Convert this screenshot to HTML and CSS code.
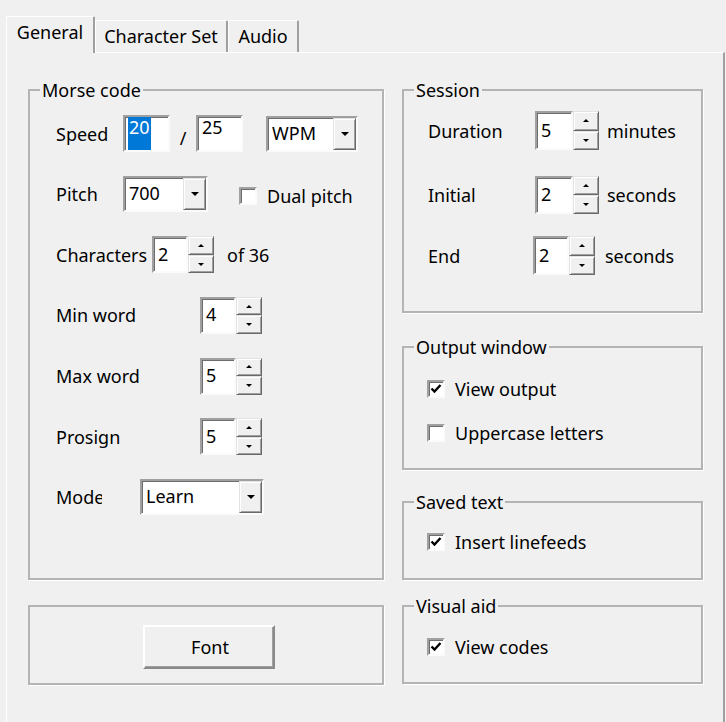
FILE: index.html
```html
<!DOCTYPE html>
<html lang="en">
<head>
<meta charset="utf-8">
<title>General</title>
<link rel="stylesheet" href="styles.css">
</head>
<body>
<div class="dialog">
  <div class="tabs">
    <div class="tab tab-general is-active">General</div>
    <div class="tab tab-charset">Character Set</div>
    <div class="tab tab-audio">Audio</div>
  </div>
  <div class="panel">
    <div class="col col-left">
      <fieldset class="group morse">
        <legend>Morse code</legend>
        <div class="group-body rows">
          <div class="row">
            <span class="lbl lbl-67">Speed</span>
            <div class="edit edit-top w47"><span class="sel">20</span></div>
            <span class="slash">/</span>
            <div class="edit edit-top w47"><span class="txt">25</span></div>
            <div class="combo w92 ml-23"><span class="combo-text">WPM</span><span class="drop"></span></div>
          </div>
          <div class="row">
            <span class="lbl lbl-67">Pitch</span>
            <div class="combo w85"><span class="combo-text">700</span><span class="drop"></span></div>
            <span class="check ml-31 check-low"><span class="box"></span>Dual pitch</span>
          </div>
          <div class="row">
            <span class="lbl lbl-96">Characters</span>
            <div class="spinbox"><div class="edit w36"><span class="txt">2</span></div><div class="spin"><span class="up"></span><span class="down"></span></div></div>
            <span class="after ml-13">of 36</span>
          </div>
          <div class="row">
            <span class="lbl lbl-144">Min word</span>
            <div class="spinbox"><div class="edit w36"><span class="txt">4</span></div><div class="spin"><span class="up"></span><span class="down"></span></div></div>
          </div>
          <div class="row">
            <span class="lbl lbl-144">Max word</span>
            <div class="spinbox"><div class="edit w36"><span class="txt">5</span></div><div class="spin"><span class="up"></span><span class="down"></span></div></div>
          </div>
          <div class="row">
            <span class="lbl lbl-144">Prosign</span>
            <div class="spinbox"><div class="edit w36"><span class="txt">5</span></div><div class="spin"><span class="up"></span><span class="down"></span></div></div>
          </div>
          <div class="row">
            <span class="lbl lbl-mode">Mode</span>
            <div class="combo w124"><span class="combo-text">Learn</span><span class="drop"></span></div>
          </div>
        </div>
      </fieldset>
      <div class="group font-box">
        <button class="push" type="button">Font</button>
      </div>
    </div>

    <div class="col col-right">
      <fieldset class="group session">
        <legend>Session</legend>
        <div class="group-body srows">
          <div class="srow">
            <span class="lbl lbl-107">Duration</span>
            <div class="spinbox"><div class="edit w38"><span class="txt">5</span></div><div class="spin"><span class="up"></span><span class="down"></span></div></div>
            <span class="after ml-8">minutes</span>
          </div>
          <div class="srow">
            <span class="lbl lbl-107">Initial</span>
            <div class="spinbox"><div class="edit w38"><span class="txt">2</span></div><div class="spin"><span class="up"></span><span class="down"></span></div></div>
            <span class="after ml-8">seconds</span>
          </div>
          <div class="srow">
            <span class="lbl lbl-105">End</span>
            <div class="spinbox"><div class="edit w36"><span class="txt">2</span></div><div class="spin"><span class="up"></span><span class="down"></span></div></div>
            <span class="after ml-10">seconds</span>
          </div>
        </div>
      </fieldset>

      <fieldset class="group output">
        <legend>Output window</legend>
        <div class="group-body checks">
          <span class="check"><span class="box"><svg viewBox="0 0 14 14" width="14" height="14"><path d="M2.5 6.5 L5.5 9.5 L11.5 3" fill="none" stroke="#000" stroke-width="2.4"/></svg></span>View output</span>
          <span class="check"><span class="box"></span>Uppercase letters</span>
        </div>
      </fieldset>

      <fieldset class="group saved">
        <legend>Saved text</legend>
        <div class="group-body checks">
          <span class="check"><span class="box"><svg viewBox="0 0 14 14" width="14" height="14"><path d="M2.5 6.5 L5.5 9.5 L11.5 3" fill="none" stroke="#000" stroke-width="2.4"/></svg></span>Insert linefeeds</span>
        </div>
      </fieldset>

      <fieldset class="group visual">
        <legend>Visual aid</legend>
        <div class="group-body checks">
          <span class="check"><span class="box"><svg viewBox="0 0 14 14" width="14" height="14"><path d="M2.5 6.5 L5.5 9.5 L11.5 3" fill="none" stroke="#000" stroke-width="2.4"/></svg></span>View codes</span>
        </div>
      </fieldset>
    </div>
  </div>
</div>
</body>
</html>
```
FILE: styles.css
```css
* { box-sizing: border-box; }
html, body { margin: 0; padding: 0; }
body {
  width: 726px;
  height: 722px;
  overflow: hidden;
  background: #f0f0f0;
  color: #000;
  font-family: "Noto Sans", "DejaVu Sans", sans-serif;
  font-size: 18px;
}
.dialog { padding: 16px 0 0 6px; }

/* tabs */
.tabs {
  display: flex;
  align-items: flex-end;
  height: 36px;
  position: relative;
  z-index: 2;
}
.tab {
  height: 32px;
  line-height: 30px;
  text-align: center;
  white-space: nowrap;
  border-top: 1px solid #fff;
  border-left: 1px solid #fff;
  border-right: 2px solid #a0a0a0;
  border-top-right-radius: 2px;
  background: #f0f0f0;
}
.tab.is-active { height: 37px; margin-bottom: -1px; padding-bottom: 4px; }
.tab-general { width: 89px; }
.tab-charset { width: 133px; }
.tab-audio { width: 71px; }

/* panel */
.panel {
  width: 719px;
  height: 690px;
  border-top: 1px solid #fff;
  border-left: 1px solid #fff;
  border-right: 2px solid #a0a0a0;
  padding: 26px 0 0 21px;
  display: flex;
  gap: 18px;
}
.col { display: flex; flex-direction: column; }
.col-left { width: 356px; }
.col-right { width: 301px; }

/* group boxes */
.group {
  margin: 0;
  padding: 0;
  min-width: 0;
  border: 2px solid #b4b4b4;
  box-shadow: 1px 1px 0 #fff;
}
.group legend {
  padding: 0 2px;
  margin-left: 10px;
  line-height: 22px;
}
.morse { height: 501px; }
.morse .group-body { padding: 14px 0 0 26px; }
.font-box { height: 80px; margin-top: 25px; padding: 18px 0 0 113px; }
.session { height: 234px; }
.session .group-body { padding: 10px 0 0 24px; }
.output { height: 134px; margin-top: 23px; }
.output .group-body { padding: 20px 0 0 23px; }
.saved { height: 89px; margin-top: 21px; }
.saved .group-body { padding: 18px 0 0 23px; }
.visual { height: 89px; margin-top: 15px; }
.visual .group-body { padding: 19px 0 0 23px; }

/* rows */
.rows { display: grid; grid-auto-rows: 37px; row-gap: 23.67px; }
.row, .srow { display: flex; align-items: center; white-space: nowrap; }
.srow { height: 39px; }
.srow:nth-child(2) { margin-top: 26px; height: 38px; }
.srow:nth-child(3) { margin-top: 22px; }

.lbl { flex: none; }
.lbl-67 { width: 67px; }
.lbl-96 { width: 96px; }
.lbl-144 { width: 144px; }
.lbl-107 { width: 107px; }
.lbl-105 { width: 105px; }
.lbl-mode { width: 46px; overflow: hidden; margin-right: 38px; }

.ml-8 { margin-left: 8px; }
.ml-10 { margin-left: 10px; }
.ml-13 { margin-left: 13px; }
.ml-23 { margin-left: 23px; }
.ml-31 { margin-left: 31px; }

.w36 { width: 36px; }
.w38 { width: 38px; }
.w47 { width: 47px; }
.w85 { width: 85px; }
.w92 { width: 92px; }
.w124 { width: 124px; }

/* sunken edit */
.edit, .combo, .box {
  background: #fff;
  border: 2px solid;
  border-color: #a0a0a0 #fbfbfb #fbfbfb #a0a0a0;
  box-shadow: inset 1px 1px 0 #6d6d6d;
}
.edit {
  height: 100%;
  display: flex;
  align-items: center;
  padding-left: 4px;
}
.edit-top { align-items: stretch; padding-left: 3px; }
.edit-top .txt { line-height: 20px; padding-left: 1px; margin-top: 0; }
.sel {
  background: #0078d7;
  color: #fff;
  line-height: 20px;
  padding: 0 1px;
  width: 23px;
}
.row .edit { height: 37px; }
.txt { line-height: 20px; margin-top: -2px; }

.slash {
  width: 26px;
  text-align: center;
  padding-top: 8px;
}

/* combo */
.combo {
  height: 36px;
  display: flex;
  align-items: stretch;
}
.combo-text { flex: 1; padding-left: 4px; line-height: 30px; }
.drop, .spin span, .push {
  background: #f0f0f0;
  border: 1px solid;
  border-color: #e3e3e3 #696969 #696969 #e3e3e3;
  box-shadow: inset 1px 1px 0 #fff, inset -1px -1px 0 #a0a0a0;
}
.drop {
  width: 23px;
  display: flex;
  align-items: center;
  justify-content: center;
}
.drop::after {
  content: "";
  border-left: 4px solid transparent;
  border-right: 4px solid transparent;
  border-top: 4px solid #000;
}

/* spin */
.spinbox { display: flex; height: 100%; }
.spin {
  width: 26px;
  display: grid;
  grid-template-rows: 1fr 1fr;
}
.spin span {
  display: flex;
  align-items: center;
  justify-content: center;
}
.spin .up::after {
  content: "";
  border-left: 3.5px solid transparent;
  border-right: 3.5px solid transparent;
  border-bottom: 3.5px solid #000;
}
.spin .down::after {
  content: "";
  border-left: 3.5px solid transparent;
  border-right: 3.5px solid transparent;
  border-top: 3.5px solid #000;
}

/* checkbox */
.check {
  display: flex;
  align-items: center;
  height: 22px;
  white-space: nowrap;
}
.check-low { margin-top: 4px; }
.box {
  width: 18px;
  height: 18px;
  margin-right: 10px;
  display: flex;
  align-items: center;
  justify-content: center;
  flex: none;
}
.checks { display: flex; flex-direction: column; gap: 22px; }

/* push button */
.push {
  width: 132px;
  height: 44px;
  font: inherit;
  color: #000;
  padding: 0 0 0 2px;
  border-width: 2px;
  border-color: #fff #8a8a8a #8a8a8a #fff;
  box-shadow: inset -1px -1px 0 #a0a0a0;
}
```
